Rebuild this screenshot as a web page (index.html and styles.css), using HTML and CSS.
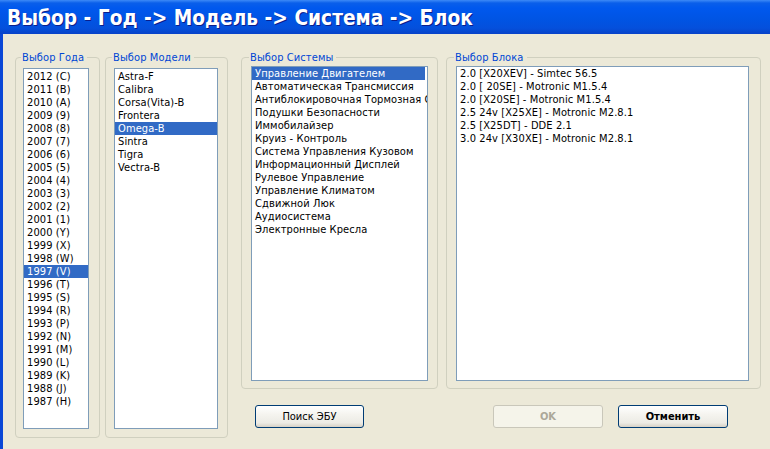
FILE: index.html
```html
<!DOCTYPE html>
<html lang="ru">
<head>
<meta charset="utf-8">
<title>Выбор</title>
<link rel="stylesheet" href="styles.css">
</head>
<body>
<div class="window">
  <div class="titlebar"><span class="title">Выбор - Год -&gt; Модель -&gt; Система -&gt; Блок</span></div>
  <div class="client">
    <fieldset class="group g-year">
      <legend>Выбор Года</legend>
      <div class="list l-year">
        <div class="item">2012 (C)</div>
        <div class="item">2011 (B)</div>
        <div class="item">2010 (A)</div>
        <div class="item">2009 (9)</div>
        <div class="item">2008 (8)</div>
        <div class="item">2007 (7)</div>
        <div class="item">2006 (6)</div>
        <div class="item">2005 (5)</div>
        <div class="item">2004 (4)</div>
        <div class="item">2003 (3)</div>
        <div class="item">2002 (2)</div>
        <div class="item">2001 (1)</div>
        <div class="item">2000 (Y)</div>
        <div class="item">1999 (X)</div>
        <div class="item">1998 (W)</div>
        <div class="item sel">1997 (V)</div>
        <div class="item">1996 (T)</div>
        <div class="item">1995 (S)</div>
        <div class="item">1994 (R)</div>
        <div class="item">1993 (P)</div>
        <div class="item">1992 (N)</div>
        <div class="item">1991 (M)</div>
        <div class="item">1990 (L)</div>
        <div class="item">1989 (K)</div>
        <div class="item">1988 (J)</div>
        <div class="item">1987 (H)</div>
      </div>
    </fieldset>
    <fieldset class="group g-model">
      <legend>Выбор Модели</legend>
      <div class="list l-model">
        <div class="item">Astra-F</div>
        <div class="item">Calibra</div>
        <div class="item">Corsa(Vita)-B</div>
        <div class="item">Frontera</div>
        <div class="item sel">Omega-B</div>
        <div class="item">Sintra</div>
        <div class="item">Tigra</div>
        <div class="item">Vectra-B</div>
      </div>
    </fieldset>
    <div class="col3">
      <div class="row34">
        <fieldset class="group g-sys">
          <legend>Выбор Системы</legend>
          <div class="list l-sys">
            <div class="item sel">Управление Двигателем</div>
            <div class="item">Автоматическая Трансмиссия</div>
            <div class="item">Антиблокировочная Тормозная Система</div>
            <div class="item">Подушки Безопасности</div>
            <div class="item">Иммобилайзер</div>
            <div class="item">Круиз - Контроль</div>
            <div class="item">Система Управления Кузовом</div>
            <div class="item">Информационный Дисплей</div>
            <div class="item">Рулевое Управление</div>
            <div class="item">Управление Климатом</div>
            <div class="item">Сдвижной Люк</div>
            <div class="item">Аудиосистема</div>
            <div class="item">Электронные Кресла</div>
          </div>
        </fieldset>
        <fieldset class="group g-block">
          <legend>Выбор Блока</legend>
          <div class="list l-block">
            <div class="item">2.0 [X20XEV] - Simtec 56.5</div>
            <div class="item">2.0 [ 20SE] - Motronic M1.5.4</div>
            <div class="item">2.0 [X20SE] - Motronic M1.5.4</div>
            <div class="item">2.5 24v [X25XE] - Motronic M2.8.1</div>
            <div class="item">2.5 [X25DT] - DDE 2.1</div>
            <div class="item">3.0 24v [X30XE] - Motronic M2.8.1</div>
          </div>
        </fieldset>
      </div>
      <div class="buttons">
        <button class="btn b-search">Поиск ЭБУ</button>
        <button class="btn b-ok" disabled>OK</button>
        <button class="btn b-cancel">Отменить</button>
      </div>
    </div>
  </div>
</div>
</body>
</html>
```
FILE: styles.css
```css
html, body {
  margin: 0;
  padding: 0;
  background: #ECE9D8;
}
.window {
  width: 770px;
  height: 449px;
  overflow: hidden;
  background: #ECE9D8;
  font-family: "DejaVu Sans Condensed", "DejaVu Sans", "Liberation Sans", sans-serif;
  font-size: 11px;
  color: #000;
}
.titlebar {
  height: 34px;
  box-sizing: border-box;
  padding-left: 7px;
  background: linear-gradient(to bottom, #3D8AF7 0px, #0A5FEA 3px, #0058EE 8px, #0054E3 20px, #0450DC 28px, #0842C8 34px);
  display: flex;
  align-items: center;
}
.title {
  color: #fff;
  font-family: "DejaVu Sans Condensed", "DejaVu Sans", sans-serif;
  font-weight: bold;
  font-size: 20.7px;
  text-shadow: 1px 1px 0 #0A1E8C;
  white-space: nowrap;
  padding-top: 1px;
}
.client {
  display: flex;
  align-items: flex-start;
  height: 415px;
  box-sizing: border-box;
  border-left: 3px solid #0A47D6;
  padding: 17px 0 0 12px;
}
.group {
  margin: 0;
  border: 1px solid #D0D0BF;
  border-radius: 4px;
  box-sizing: border-box;
  min-width: 0;
}
.group legend {
  color: #0046D5;
  line-height: 13px;
  padding: 0 3px 0 1px;
  margin-left: -2px;
  font-size: 11px;
  letter-spacing: 0.1px;
}
.list {
  background: #fff;
  border: 1px solid #7F9DB9;
  box-sizing: border-box;
  overflow: hidden;
}
.item {
  height: 13px;
  line-height: 13px;
  padding-left: 3px;
  white-space: nowrap;
  overflow: hidden;
  letter-spacing: 0.1px;
}
.item.sel {
  background: #316AC5;
  color: #fff;
}
.g-year {
  width: 85px;
  padding: 4px 0 8px 7px;
}
.l-year {
  width: 66px;
  height: 361px;
  padding-top: 1px;
}
.g-model {
  width: 123px;
  margin-left: 5px;
  padding: 4px 0 8px 8px;
}
.l-model {
  width: 104px;
  height: 361px;
  padding-top: 1px;
}
.col3 {
  display: flex;
  flex-direction: column;
  margin-left: 13px;
  width: 520px;
}
.row34 {
  display: flex;
  gap: 8px;
}
.g-sys {
  width: 197px;
  padding: 2px 0 7px 9px;
}
.l-sys {
  width: 177px;
  height: 315px;
}
.l-sys .item.sel {
  margin-right: 2px;
}
.g-block {
  width: 315px;
  padding: 2px 0 7px 9px;
}
.l-block {
  width: 293px;
  height: 315px;
}
.buttons {
  display: flex;
  margin-top: 16px;
}
.btn {
  height: 23px;
  box-sizing: border-box;
  border: 1px solid #003C74;
  border-radius: 3px;
  background: linear-gradient(to bottom, #FFFFFF 0%, #F5F4EF 40%, #ECEBE5 80%, #D6D0C5 100%);
  font-family: "DejaVu Sans Condensed", "DejaVu Sans", sans-serif;
  font-size: 11px;
  color: #000;
  padding: 0;
}
.b-search {
  width: 109px;
  margin-left: 14px;
}
.b-ok {
  width: 110px;
  margin-left: 129px;
  border-color: #C9C7BA;
  background: #F5F4EA;
  color: #ACA899;
  font-weight: bold;
}
.b-cancel {
  width: 110px;
  margin-left: 15px;
  font-weight: bold;
}
```
